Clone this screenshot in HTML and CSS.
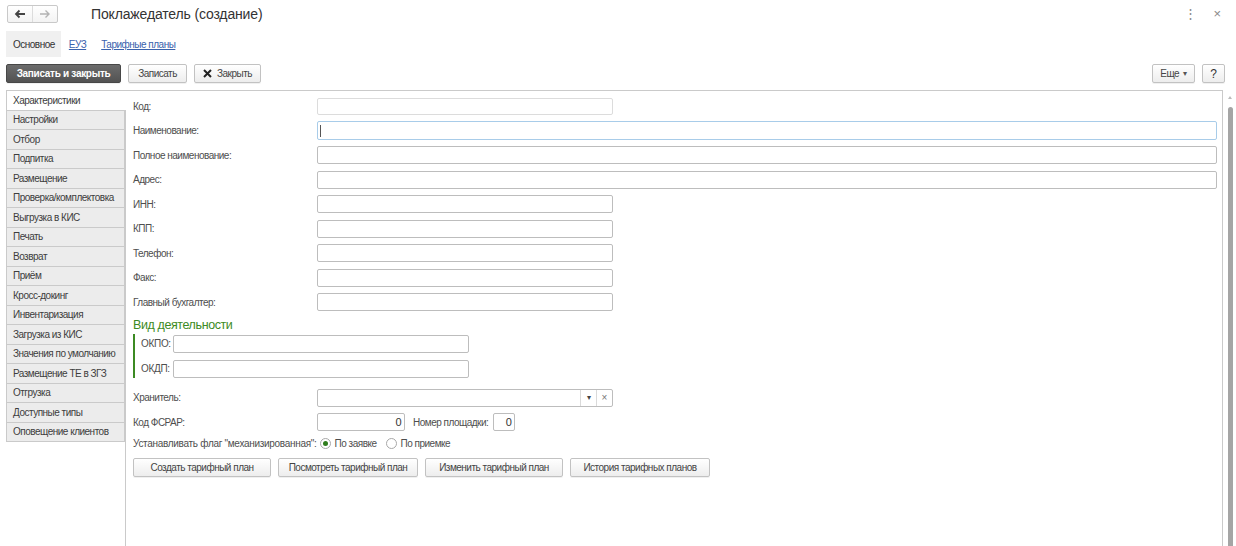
FILE: index.html
```html
<!DOCTYPE html>
<html lang="ru">
<head>
<meta charset="utf-8">
<title>Поклажедатель (создание)</title>
<link rel="stylesheet" href="styles.css">
</head>
<body>
<div class="app">
  <header class="titlebar">
    <div class="navgroup">
      <span class="navbtn">
        <svg width="12" height="10" viewBox="0 0 12 10"><path d="M11 5H2M5.5 1.5L2 5l3.5 3.5" fill="none" stroke="#444" stroke-width="1.8"/></svg>
      </span>
      <span class="navbtn">
        <svg width="12" height="10" viewBox="0 0 12 10"><path d="M1 5h9M6.5 1.5L10 5 6.5 8.5" fill="none" stroke="#b3b3b3" stroke-width="1.4"/></svg>
      </span>
    </div>
    <h1 class="title">Поклажедатель (создание)</h1>
    <div class="winctl">
      <span class="more">⋮</span>
      <span class="close">×</span>
    </div>
  </header>

  <nav class="sections">
    <span class="section active">Основное</span>
    <a class="section link">ЕУЗ</a>
    <a class="section link">Тарифные планы</a>
  </nav>

  <div class="toolbar">
    <button class="btn primary w-save-close">Записать и закрыть</button>
    <button class="btn w-save">Записать</button>
    <button class="btn w-close">
      <svg width="9" height="9" viewBox="0 0 9 9"><path d="M1 1l7 7M8 1L1 8" stroke="#222" stroke-width="2"/></svg>
      Закрыть
    </button>
    <span class="spacer"></span>
    <button class="btn w-more">Еще <span class="caret">▾</span></button>
    <button class="btn w-help">?</button>
  </div>

  <div class="main">
    <ul class="pages">
      <li class="page active">Характеристики</li>
      <li class="page">Настройки</li>
      <li class="page">Отбор</li>
      <li class="page">Подпитка</li>
      <li class="page">Размещение</li>
      <li class="page">Проверка/комплектовка</li>
      <li class="page">Выгрузка в КИС</li>
      <li class="page">Печать</li>
      <li class="page">Возврат</li>
      <li class="page">Приём</li>
      <li class="page">Кросс-докинг</li>
      <li class="page">Инвентаризация</li>
      <li class="page">Загрузка из КИС</li>
      <li class="page">Значения по умолчанию</li>
      <li class="page">Размещение ТЕ в ЗГЗ</li>
      <li class="page">Отгрузка</li>
      <li class="page">Доступные типы</li>
      <li class="page last">Оповещение клиентов</li>
    </ul>

    <div class="panel">
      <div class="form">
        <div class="row"><label>Код:</label><span class="input short disabled"></span></div>
        <div class="row"><label>Наименование:</label><span class="input long focused"><span class="cursor"></span></span></div>
        <div class="row"><label>Полное наименование:</label><span class="input long"></span></div>
        <div class="row"><label>Адрес:</label><span class="input long"></span></div>
        <div class="row"><label>ИНН:</label><span class="input short"></span></div>
        <div class="row"><label>КПП:</label><span class="input short"></span></div>
        <div class="row"><label>Телефон:</label><span class="input short"></span></div>
        <div class="row"><label>Факс:</label><span class="input short"></span></div>
        <div class="row"><label>Главный бухгалтер:</label><span class="input short"></span></div>

        <div class="group-title">Вид деятельности</div>
        <div class="group">
          <div class="grow"><label>ОКПО:</label><span class="input mid"></span></div>
          <div class="grow"><label>ОКДП:</label><span class="input mid"></span></div>
        </div>

        <div class="row after-group"><label>Хранитель:</label>
          <span class="input short combo">
            <span class="combo-btn"><span class="tri">▾</span></span>
            <span class="combo-btn x">×</span>
          </span>
        </div>
        <div class="row"><label>Код ФСРАР:</label>
          <span class="input num">0</span>
          <span class="inline-label">Номер площадки:</span>
          <span class="input num tiny">0</span>
        </div>
        <div class="radio-row">
          <span class="radio-label">Устанавливать флаг "механизированная":</span>
          <span class="radio checked"></span><span class="radio-text">По заявке</span>
          <span class="radio"></span><span class="radio-text">По приемке</span>
        </div>
        <div class="buttons">
          <button class="btn b1">Создать тарифный план</button>
          <button class="btn b2">Посмотреть тарифный план</button>
          <button class="btn b3">Изменить тарифный план</button>
          <button class="btn b4">История тарифных планов</button>
        </div>
      </div>
    </div>

    <div class="scrollbar">
      <span class="arrow-up"></span>
      <span class="thumb"></span>
    </div>
  </div>
</div>
</body>
</html>
```

FILE: styles.css
```css
html, body {
  margin: 0;
  padding: 0;
  background: #fff;
}
body {
  font-family: "Liberation Sans", Arial, sans-serif;
  font-size: 10px;
  letter-spacing: -0.5px;
  color: #333;
  width: 1236px;
  height: 546px;
  overflow: hidden;
}
.app {
  display: flex;
  flex-direction: column;
  height: 546px;
}

/* title bar */
.titlebar {
  display: flex;
  align-items: center;
  height: 27px;
  padding: 0 0 0 7px;
}
.navgroup {
  display: flex;
  width: 51px;
  height: 18px;
  border: 1px solid #c9c9c9;
  border-radius: 2px;
  box-sizing: border-box;
  background: linear-gradient(#fff, #f3f3f3);
}
.navbtn {
  flex: 1;
  display: flex;
  align-items: center;
  justify-content: center;
}
.navbtn + .navbtn {
  border-left: 1px solid #dcdcdc;
}
.title {
  margin: 0 0 0 33px;
  font-size: 14px;
  letter-spacing: -0.15px;
  font-weight: normal;
  color: #333;
}
.winctl {
  margin-left: auto;
  display: flex;
  align-items: center;
  gap: 16px;
  padding-right: 15px;
  color: #888;
  letter-spacing: 0;
}
.winctl .more { font-size: 13px; }
.winctl .close { font-size: 13px; }

/* sections */
.sections {
  display: flex;
  align-items: center;
  height: 26px;
  margin-top: 4px;
  padding-left: 6px;
}
.section {
  display: flex;
  align-items: center;
  height: 26px;
  white-space: nowrap;
}
.section.active {
  background: #f0f0f0;
  padding: 0 6px 0 7px;
  color: #333;
}
.section.link {
  color: #3a62ac;
  text-decoration: underline;
  margin-left: 8px;
  margin-right: 7px;
}

/* toolbar */
.toolbar {
  display: flex;
  align-items: center;
  height: 19px;
  margin-top: 7px;
  padding: 0 11px 0 6px;
  gap: 7px;
}
.spacer { flex: 1; }
.btn {
  font-family: "Liberation Sans", Arial, sans-serif;
  font-size: 10px;
  letter-spacing: -0.5px;
  color: #444;
  height: 19px;
  box-sizing: border-box;
  border: 1px solid #c2c2c2;
  border-radius: 2px;
  background: linear-gradient(#ffffff, #ededed);
  padding: 0 4px;
  display: inline-flex;
  align-items: center;
  justify-content: center;
  gap: 5px;
  margin: 0;
  white-space: nowrap;
  cursor: default;
  box-shadow: 0 1px 0 rgba(0,0,0,0.06);
}
.btn.primary {
  background: linear-gradient(#6c6c6c, #525252);
  border-color: #474747;
  color: #fff;
  font-weight: bold;
  letter-spacing: -0.3px;
}
.w-save-close { width: 115px; }
.w-save { width: 59px; }
.w-close { width: 67px; }
.w-more { width: 43px; gap: 4px; }
.w-help { width: 23px; font-size: 12px; color: #333; letter-spacing: 0; }
.caret { font-size: 8px; color: #555; }

/* main */
.main {
  flex: 1;
  display: flex;
  margin-top: 7px;
  padding-left: 6px;
  min-height: 0;
}
.pages {
  list-style: none;
  margin: 0;
  padding: 0;
  width: 119px;
  position: relative;
  z-index: 1;
}
.page {
  height: 19.5px;
  box-sizing: border-box;
  border: 1px solid #cacaca;
  border-bottom: none;
  background: #ececec;
  padding-left: 6px;
  display: flex;
  align-items: center;
  color: #3d3d3d;
  white-space: nowrap;
}
.page.last { border-bottom: 1px solid #cacaca; height: 20px; }
.page.active {
  background: #fff;
  border-right: none;
  margin-right: -1px;
}

.panel {
  flex: 1;
  border-left: 1px solid #cacaca;
  border-top: 1px solid #cacaca;
  border-right: 1px solid #cacaca;
  min-width: 0;
}
.form {
  padding: 3px 5px 0 7px;
  display: flex;
  flex-direction: column;
}
.row {
  display: flex;
  align-items: center;
  height: 24.5px;
}
.row label {
  width: 184px;
  flex: none;
  color: #4e4e4e;
}
.input {
  display: flex;
  align-items: center;
  height: 18px;
  box-sizing: border-box;
  border: 1px solid #bdbdbd;
  border-radius: 2px;
  background: #fff;
  position: relative;
}
.input.short { width: 296px; }
.input.long { flex: 1; }
.input.mid { width: 296px; }
.input.disabled { border-color: #dcdcdc; height: 17px; }
.input.focused { border-color: #a8cce9; height: 19px; }
.cursor {
  width: 1px;
  height: 12px;
  background: #555;
  margin-left: 2px;
}
.combo {
  justify-content: flex-end;
}
.combo-btn {
  width: 15px;
  height: 16px;
  border-left: 1px solid #dadada;
  display: flex;
  align-items: center;
  justify-content: center;
  color: #444;
  font-size: 8px;
  letter-spacing: 0;
}
.combo-btn.x { color: #777; font-size: 10px; }
.input.num {
  width: 88px;
  justify-content: flex-end;
  padding-right: 3px;
  color: #333;
  font-size: 11px;
}
.input.num.tiny { width: 22px; }
.inline-label {
  color: #4e4e4e;
  margin: 0 5px 0 8px;
}

.group-title {
  color: #3c8a23;
  font-size: 12.5px;
  letter-spacing: -0.4px;
  height: 18px;
  display: flex;
  align-items: center;
  margin-top: 1px;
}
.group {
  border-left: 2px solid #3c8a23;
  height: 44px;
  margin-top: 0;
  padding-left: 6px;
  display: flex;
  flex-direction: column;
  gap: 7px;
  padding-top: 1px;
  box-sizing: border-box;
}
.grow {
  display: flex;
  align-items: center;
  height: 18px;
  flex: none;
}
.grow label {
  color: #4e4e4e;
  width: 32px;
  font-size: 10px;
  letter-spacing: -0.3px;
}
.after-group { margin-top: 8px; }

.radio-row {
  display: flex;
  align-items: center;
  height: 18px;
  color: #4e4e4e;
}
.radio-label { margin-right: 3px; letter-spacing: -0.3px; }
.radio {
  width: 11px;
  height: 11px;
  box-sizing: border-box;
  border: 1px solid #a8a8a8;
  border-radius: 50%;
  background: #fff;
  display: inline-flex;
  align-items: center;
  justify-content: center;
  margin-right: 4px;
}
.radio.checked::after {
  content: "";
  width: 5px;
  height: 5px;
  border-radius: 50%;
  background: #2f7d1d;
}
.radio-text { margin-right: 9px; }

.buttons {
  display: flex;
  gap: 7px;
  margin-top: 5px;
}
.b1 { width: 138px; }
.b2 { width: 140px; }
.b3 { width: 138px; }
.b4 { width: 140px; }

.scrollbar {
  width: 13px;
  position: relative;
}
.arrow-up {
  position: absolute;
  top: 6px;
  left: 5px;
  width: 0;
  height: 0;
  border-left: 2px solid transparent;
  border-right: 2px solid transparent;
  border-bottom: 3px solid #bbb;
}
.thumb {
  position: absolute;
  top: 17px;
  bottom: 0;
  left: 5px;
  width: 5px;
  border-radius: 3px 3px 0 0;
  background: #a5a5a5;
}
```
